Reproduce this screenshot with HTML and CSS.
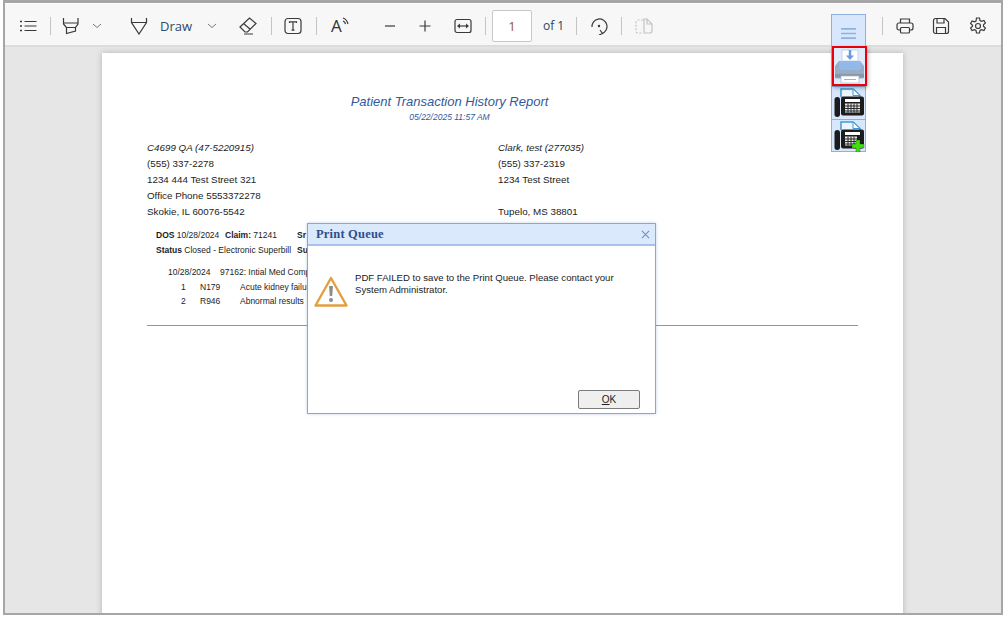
FILE: index.html
```html
<!DOCTYPE html>
<html lang="en">
<head>
<meta charset="utf-8">
<title>Patient Transaction History Report</title>
<link rel="stylesheet" href="styles.css">
</head>
<body>
<div class="frame">
  <div class="toolbar">
    <svg class="ic i-list" viewBox="0 0 18 18"><path d="M5.500 4.500h12M5.500 9h12M5.500 13.500h12"/><path class="dots" d="M1 4.500h2M1 9h2M1 13.500h2"/></svg>
    <span class="sep s-1"></span>
    <svg class="ic i-hl" viewBox="0 0 18 18"><path d="M1.500 1v6l3 3.500v6l9-2.500v-3.500l2.500-3.500V1M1.500 6h14.500M4.500 10.500h9"/></svg>
    <svg class="chev c-1" viewBox="0 0 10 6"><path d="M1 1l4 3.500L9 1"/></svg>
    <svg class="ic i-draw" viewBox="0 0 18 18"><path d="M1.500 1v4.500L9 17l7.500-11.500V1M1.500 5.500h15"/></svg>
    <span class="draw-label">Draw</span>
    <svg class="chev c-2" viewBox="0 0 10 6"><path d="M1 1l4 3.500L9 1"/></svg>
    <svg class="ic i-eraser" viewBox="0 0 18 18"><path d="M1 10L10.500 1l6.500 5.500-8.500 8.500H6zM4.500 6.500l7 6M5 17h9"/></svg>
    <span class="sep s-2"></span>
    <svg class="ic i-text" viewBox="0 0 18 18"><rect x="1" y="1.500" width="16" height="15" rx="3"/><path d="M5.500 6V4.800h7V6M9 4.800v8.400M7.500 13.200h3"/></svg>
    <span class="sep s-3"></span>
    <span class="read-aloud"><span class="ra-a">A</span><svg class="ra-w" viewBox="0 0 7 11"><path d="M1 1q4 1.500 5 6M1 4q2 .8 2.500 3"/></svg></span>
    <svg class="ic i-minus" viewBox="0 0 18 18"><path d="M4 9h10"/></svg>
    <svg class="ic i-plus" viewBox="0 0 18 18"><path d="M3.500 9h11M9 3.500v11"/></svg>
    <svg class="ic i-fit" viewBox="0 0 18 18"><rect x="1" y="2.500" width="16" height="13" rx="2"/><path d="M4.500 9h9"/><path class="fill" d="M3 9l3-2.500v5zM15 9l-3-2.500v5z"/></svg>
    <span class="sep s-4"></span>
    <span class="page-input">1</span>
    <span class="page-of">of 1</span>
    <span class="sep s-5"></span>
    <svg class="ic i-rotate" viewBox="0 0 18 18"><path d="M2 10a7.500 7.500 0 1 1 10 6.500"/><path d="M10 13l2.500 3.500L9 18"/><circle class="fill" cx="9" cy="9" r="1.200"/></svg>
    <span class="sep s-6"></span>
    <svg class="ic i-pages" viewBox="0 0 18 18"><path d="M8 3H3a2 2 0 0 0-2 2v9a2 2 0 0 0 2 2h5" stroke-dasharray="2 1.500"/><path d="M9 2v14h6a2 2 0 0 0 2-2V7l-5-5zM12 2v5h5"/></svg>
    <div class="right-tools">
      <svg class="chev c-3" viewBox="0 0 10 6"><path d="M1 1l4 3.500L9 1"/></svg>
      <span class="sep s-7"></span>
      <svg class="ic i-print" viewBox="0 0 18 18"><path d="M4.500 6V2h9v4M4.500 13H3a2 2 0 0 1-2-2V8a2 2 0 0 1 2-2h12a2 2 0 0 1 2 2v3a2 2 0 0 1-2 2h-1.500"/><rect x="4.500" y="10.500" width="9" height="5.500" rx="1"/></svg>
      <svg class="ic i-save" viewBox="0 0 18 18"><path d="M1.500 3.500a2 2 0 0 1 2-2H13L16.500 5v9.500a2 2 0 0 1-2 2h-11a2 2 0 0 1-2-2z"/><path d="M5 1.500V6h7V1.500M4.500 16.500V10.500h9v6"/></svg>
      <svg class="ic i-gear" viewBox="0 0 18 18"><path d="M7.500 1h3l.5 2.500 1.500.8 2.400-.9 1.500 2.600-1.900 1.700v1.600l1.900 1.700-1.500 2.600-2.400-.9-1.500.8-.5 2.500h-3L7 13.500l-1.500-.8-2.400.9-1.500-2.600 1.900-1.700V8.200L1.600 6.500 3.100 3.900l2.400.9L7 4z"/><circle cx="9" cy="9" r="2.500"/></svg>
    </div>
  </div>

  <div class="viewer">
    <div class="page">
      <div class="report-head">
        <h1 class="report-title">Patient Transaction History Report</h1>
        <div class="report-date">05/22/2025 11:57 AM</div>
      </div>
      <div class="address-grid">
        <div class="addr em">C4699 QA (47-5220915)</div><div class="addr em">Clark, test (277035)</div>
        <div class="addr">(555) 337-2278</div><div class="addr">(555) 337-2319</div>
        <div class="addr">1234 444 Test Street 321</div><div class="addr">1234 Test Street</div>
        <div class="addr">Office Phone 5553372278</div><div class="addr"></div>
        <div class="addr">Skokie, IL 60076-5542</div><div class="addr">Tupelo, MS 38801</div>
      </div>
      <div class="claim">
        <div class="claim-row"><span class="c-dos"><b>DOS</b> 10/28/2024</span><span class="c-claim"><b>Claim:</b> 71241</span><b>Sr</b></div>
        <div class="claim-row"><span class="c-status"><b>Status</b> Closed - Electronic Superbill</span><b>Su</b></div>
      </div>
      <div class="lines">
        <div class="line-head"><span class="l-date">10/28/2024</span><span>97162: Intial Med Comp</span></div>
        <div class="line-row"><span class="l-num">1</span><span class="l-code">N179</span><span>Acute kidney failu</span></div>
        <div class="line-row"><span class="l-num">2</span><span class="l-code">R946</span><span>Abnormal results</span></div>
      </div>
      <hr class="rule">
    </div>
  </div>

  <div class="float-menu">
    <div class="fm-btn fm-menu">
      <svg class="fm-burger" viewBox="0 0 18 14"><path d="M1 2h16M1 7h16M1 12h16"/></svg>
    </div>
    <div class="fm-btn fm-print">
      <svg class="fm-svg" viewBox="0 0 31 36">
        <rect x="8" y="2" width="16" height="11" fill="#fff" stroke="#c8d4e6"/>
        <path d="M16 2v6" stroke="#6a9bdc" stroke-width="2.500"/><path d="M12 7.500h8l-4 4.500z" fill="#6a9bdc"/>
        <path d="M5 13h21l4 5v11a1.500 1.500 0 0 1-1.500 1.500h-26A1.500 1.500 0 0 1 1 29V18z" fill="#98acc2"/>
        <rect x="5" y="13" width="22" height="9" rx="2" fill="#93b8ec"/>
        <rect x="1" y="26" width="29" height="3.500" fill="#8397ae"/>
        <rect x="7" y="28" width="18" height="7" fill="#fff" stroke="#aab6c6" stroke-width=".7"/>
        <path d="M10 31.500h12" stroke="#9db3c9"/>
      </svg>
    </div>
    <div class="fm-btn fm-fax">
      <svg class="fm-svg" viewBox="0 0 32 31">
        <path d="M8 9V1h12l7 6.500V9" fill="#eef5fe" stroke="#3f9bd8" stroke-width="1.500"/><path d="M20 1v6.500h7z" fill="#fff" stroke="#3f9bd8"/>
        <rect x="1.500" y="9" width="5.500" height="20" rx="2.700" fill="#1c1c1c"/>
        <rect x="8" y="8.500" width="23" height="19" rx="2" fill="#1c1c1c"/>
        <rect x="12" y="11" width="15" height="3" fill="#fff"/>
        <path d="M12 15.500h15v9H12z" fill="#e6e6e6"/>
        <path d="M12 18h15M12 20.500h15M12 23h15M15 15.500v9M18 15.500v9M21 15.500v9M24 15.500v9" stroke="#1c1c1c" stroke-width=".9"/>
      </svg>
    </div>
    <div class="fm-btn fm-fax">
      <svg class="fm-svg" viewBox="0 0 32 31">
        <path d="M8 9V1h12l7 6.500V9" fill="#eef5fe" stroke="#3f9bd8" stroke-width="1.500"/><path d="M20 1v6.500h7z" fill="#fff" stroke="#3f9bd8"/>
        <rect x="1.500" y="9" width="5.500" height="20" rx="2.700" fill="#1c1c1c"/>
        <rect x="8" y="8.500" width="23" height="19" rx="2" fill="#1c1c1c"/>
        <rect x="12" y="11" width="15" height="3" fill="#fff"/>
        <path d="M12 15.500h12v9H12z" fill="#e6e6e6"/>
        <path d="M12 18h12M12 20.500h12M12 23h12M15 15.500v9M18 15.500v9M21 15.500v9" stroke="#1c1c1c" stroke-width=".9"/>
        <path d="M23 19h4v4h4v4h-4v4h-4v-4h-4v-4h4z" fill="#3fe010" stroke="#1c1c1c" stroke-width=".3"/>
      </svg>
    </div>
  </div>

  <div class="dialog">
    <div class="dialog-head">
      <span class="dialog-title">Print Queue</span>
      <svg class="dialog-close" viewBox="0 0 10 10"><path d="M1 1l8 8M9 1l-8 8"/></svg>
    </div>
    <div class="dialog-body">
      <svg class="warn" viewBox="0 0 34 31"><path d="M17 2L32.500 29.500h-31z" fill="#fff" stroke="#e0a040" stroke-width="2.400" stroke-linejoin="round"/><path d="M15 10h4l-.8 10h-2.400z" fill="#8c8c8c"/><circle cx="17" cy="24" r="2" fill="#8c8c8c"/></svg>
      <p class="dialog-msg">PDF FAILED to save to the Print Queue. Please contact your System Administrator.</p>
    </div>
    <div class="dialog-foot"><button class="ok-btn" type="button"><u>O</u>K</button></div>
  </div>
</div>
</body>
</html>
```
FILE: styles.css
```css
* { box-sizing: border-box; }
html, body { margin: 0; padding: 0; background: #fff; overflow: hidden; }
body { width: 1007px; height: 618px; font-family: "Liberation Sans", Arial, sans-serif; }

.frame {
  position: relative;
  display: flex;
  flex-direction: column;
  width: 1000px;
  height: 615px;
  margin-left: 3px;
  border: 2px solid #a6a6a6;
  border-top-width: 3px;
  overflow: hidden;
}

.toolbar {
  display: flex;
  align-items: center;
  flex: none;
  height: 44px;
  padding-right: 14px;
  padding-top: 2px;
  background: #f7f7f7;
  border-top: 1px solid #fff;
  border-bottom: 2px solid #dcdcdc;
}

.ic { flex: none; width: 18px; height: 18px; fill: none; stroke: #3a3a3a; stroke-width: 1.200; }
.ic .fill { fill: #3a3a3a; stroke: none; }
.ic .dots { stroke-width: 1.600; }
.sep { flex: none; width: 1px; height: 18px; background: #c4c4c4; }
.chev { flex: none; width: 10px; height: 6px; fill: none; stroke: #7a7a7a; stroke-width: 1; }

.i-list { margin-left: 14px; }
.s-1 { margin-left: 13px; }
.i-hl { margin-left: 11px; }
.c-1 { margin-left: 12px; }
.i-draw { margin-left: 28px; }
.draw-label { flex: none; width: 33px; margin-left: 12px; font: 13px "Open Sans", sans-serif; color: #2b4a6e; }
.c-2 { margin-left: 14px; }
.i-eraser { margin-left: 22px; }
.s-2 { margin-left: 14px; }
.i-text { margin-left: 12px; }
.s-3 { margin-left: 14px; }
.read-aloud { flex: none; display: flex; align-items: flex-start; width: 18px; height: 18px; margin-left: 14px; }
.ra-a { font: 17px/18px "Open Sans", sans-serif; color: #333; }
.ra-w { flex: none; width: 7px; height: 11px; fill: none; stroke: #3a3a3a; stroke-width: 1.200; }
.i-minus { margin-left: 32px; }
.i-plus { margin-left: 17px; }
.i-fit { margin-left: 20px; }
.s-4 { margin-left: 13px; }
.page-input {
  flex: none; width: 40px; height: 32px; margin-left: 6px;
  display: flex; align-items: center; justify-content: center;
  background: #fff; border: 1px solid #c8c8c8; border-radius: 2px;
  font: 13px "Open Sans", sans-serif; color: #9a5a20;
}
.page-of { flex: none; width: 21px; margin-left: 11px; font: 12px "Open Sans", sans-serif; color: #2c4660; white-space: nowrap; }
.s-5 { margin-left: 12px; }
.i-rotate { margin-left: 13px; }
.s-6 { margin-left: 13px; }
.i-pages { margin-left: 13px; stroke: #c4c4c4; }
.right-tools { display: flex; align-items: center; margin-left: auto; }
.c-3 { margin-right: 15px; }
.i-print { margin-left: 13px; }
.i-save { margin-left: 18px; }
.i-gear { margin-left: 19px; }

.viewer {
  flex: 1;
  display: flex;
  justify-content: flex-start;
  padding: 6px 0 0 97px;
  background: #e6e6e6;
  overflow: hidden;
}
.page {
  flex: none;
  width: 801px;
  height: 640px;
  padding-left: 45px;
  background: #fff;
  box-shadow: 0 0 6px rgba(0, 0, 0, .22);
  color: #1c1c1c;
}

.report-head { width: 605px; padding-top: 41px; text-align: center; color: #2f5a9c; font-style: italic; }
.report-title { margin: 0; font-size: 13px; line-height: 15px; font-weight: 400; }
.report-date { margin-top: 1px; font-size: 8.500px; line-height: 14px; }

.address-grid { display: grid; grid-template-columns: 351px 300px; margin-top: 16px; }
.addr { height: 16px; font-size: 9.800px; line-height: 16px; }
.em { font-style: italic; }

.claim { margin-top: 8px; padding-left: 9px; font-size: 8.500px; line-height: 14.500px; }
.claim-row { display: flex; white-space: nowrap; }
.c-dos { width: 69px; }
.c-claim { width: 72px; }
.c-status { width: 141px; }

.lines { margin-top: 8px; padding-left: 21px; font-size: 8.500px; line-height: 14.500px; }
.line-head { display: flex; white-space: nowrap; }
.l-date { width: 52px; }
.line-row { display: flex; white-space: nowrap; }
.l-num { width: 19px; padding-left: 13px; box-sizing: content-box; }
.l-code { width: 40px; }

.rule { width: 711px; height: 1px; margin: 16px 0 0; border: 0; background: #8c92b8; }

.float-menu {
  position: absolute;
  left: 826px;
  top: 11px;
  display: flex;
  flex-direction: column;
  width: 35px;
  height: 138px;
  background: #d8e7fb;
  border: 1px solid #8fb0e2;
}
.fm-btn { display: flex; align-items: center; justify-content: center; flex: none; }
.fm-menu { height: 31px; padding-top: 5px; }
.fm-burger { width: 17px; height: 13px; fill: none; stroke: #8fb0e2; stroke-width: 1.700; }
.fm-print {
  height: 40px;
  width: 35px;
  border: 2px solid #e8000b;
  background: #dfeafa;
  box-shadow: 1px 2px 4px rgba(0, 0, 0, .3);
  position: relative;
  z-index: 1;
}
.fm-fax { height: 33px; border-top: 1px solid #8fb0e2; }
.fm-print .fm-svg { width: 31px; height: 36px; }
.fm-fax .fm-svg { width: 32px; height: 31px; }

.dialog {
  position: absolute;
  left: 302px;
  top: 220px;
  display: flex;
  flex-direction: column;
  width: 349px;
  height: 191px;
  background: #fff;
  border: 1px solid #8aa6d8;
  box-shadow: 0 0 3px rgba(90, 120, 180, .35);
}
.dialog-head {
  display: flex;
  align-items: center;
  justify-content: space-between;
  flex: none;
  height: 22px;
  padding: 0 5px 0 8px;
  background: #dbe9fc;
  border-bottom: 2px solid #a9c1e8;
}
.dialog-title { font: 700 12.500px "Liberation Serif", serif; color: #2f4f8c; letter-spacing: .2px; }
.dialog-close { width: 9px; height: 9px; fill: none; stroke: #6d8fc6; stroke-width: 1.200; }
.dialog-body { flex: 1; display: flex; align-items: flex-start; padding: 26px 30px 0 6px; }
.warn { flex: none; width: 34px; height: 31px; margin-top: 4px; }
.dialog-msg { margin: 0 0 0 7px; font-size: 9.600px; line-height: 12px; color: #222; }
.dialog-foot { display: flex; justify-content: flex-end; flex: none; padding: 0 15px 4px 0; }
.ok-btn {
  width: 62px;
  height: 19px;
  padding: 0;
  background: #efefef;
  border: 1px solid #7b7b7b;
  border-radius: 2px;
  font: 10px "Liberation Sans", sans-serif;
  color: #222;
}
```
